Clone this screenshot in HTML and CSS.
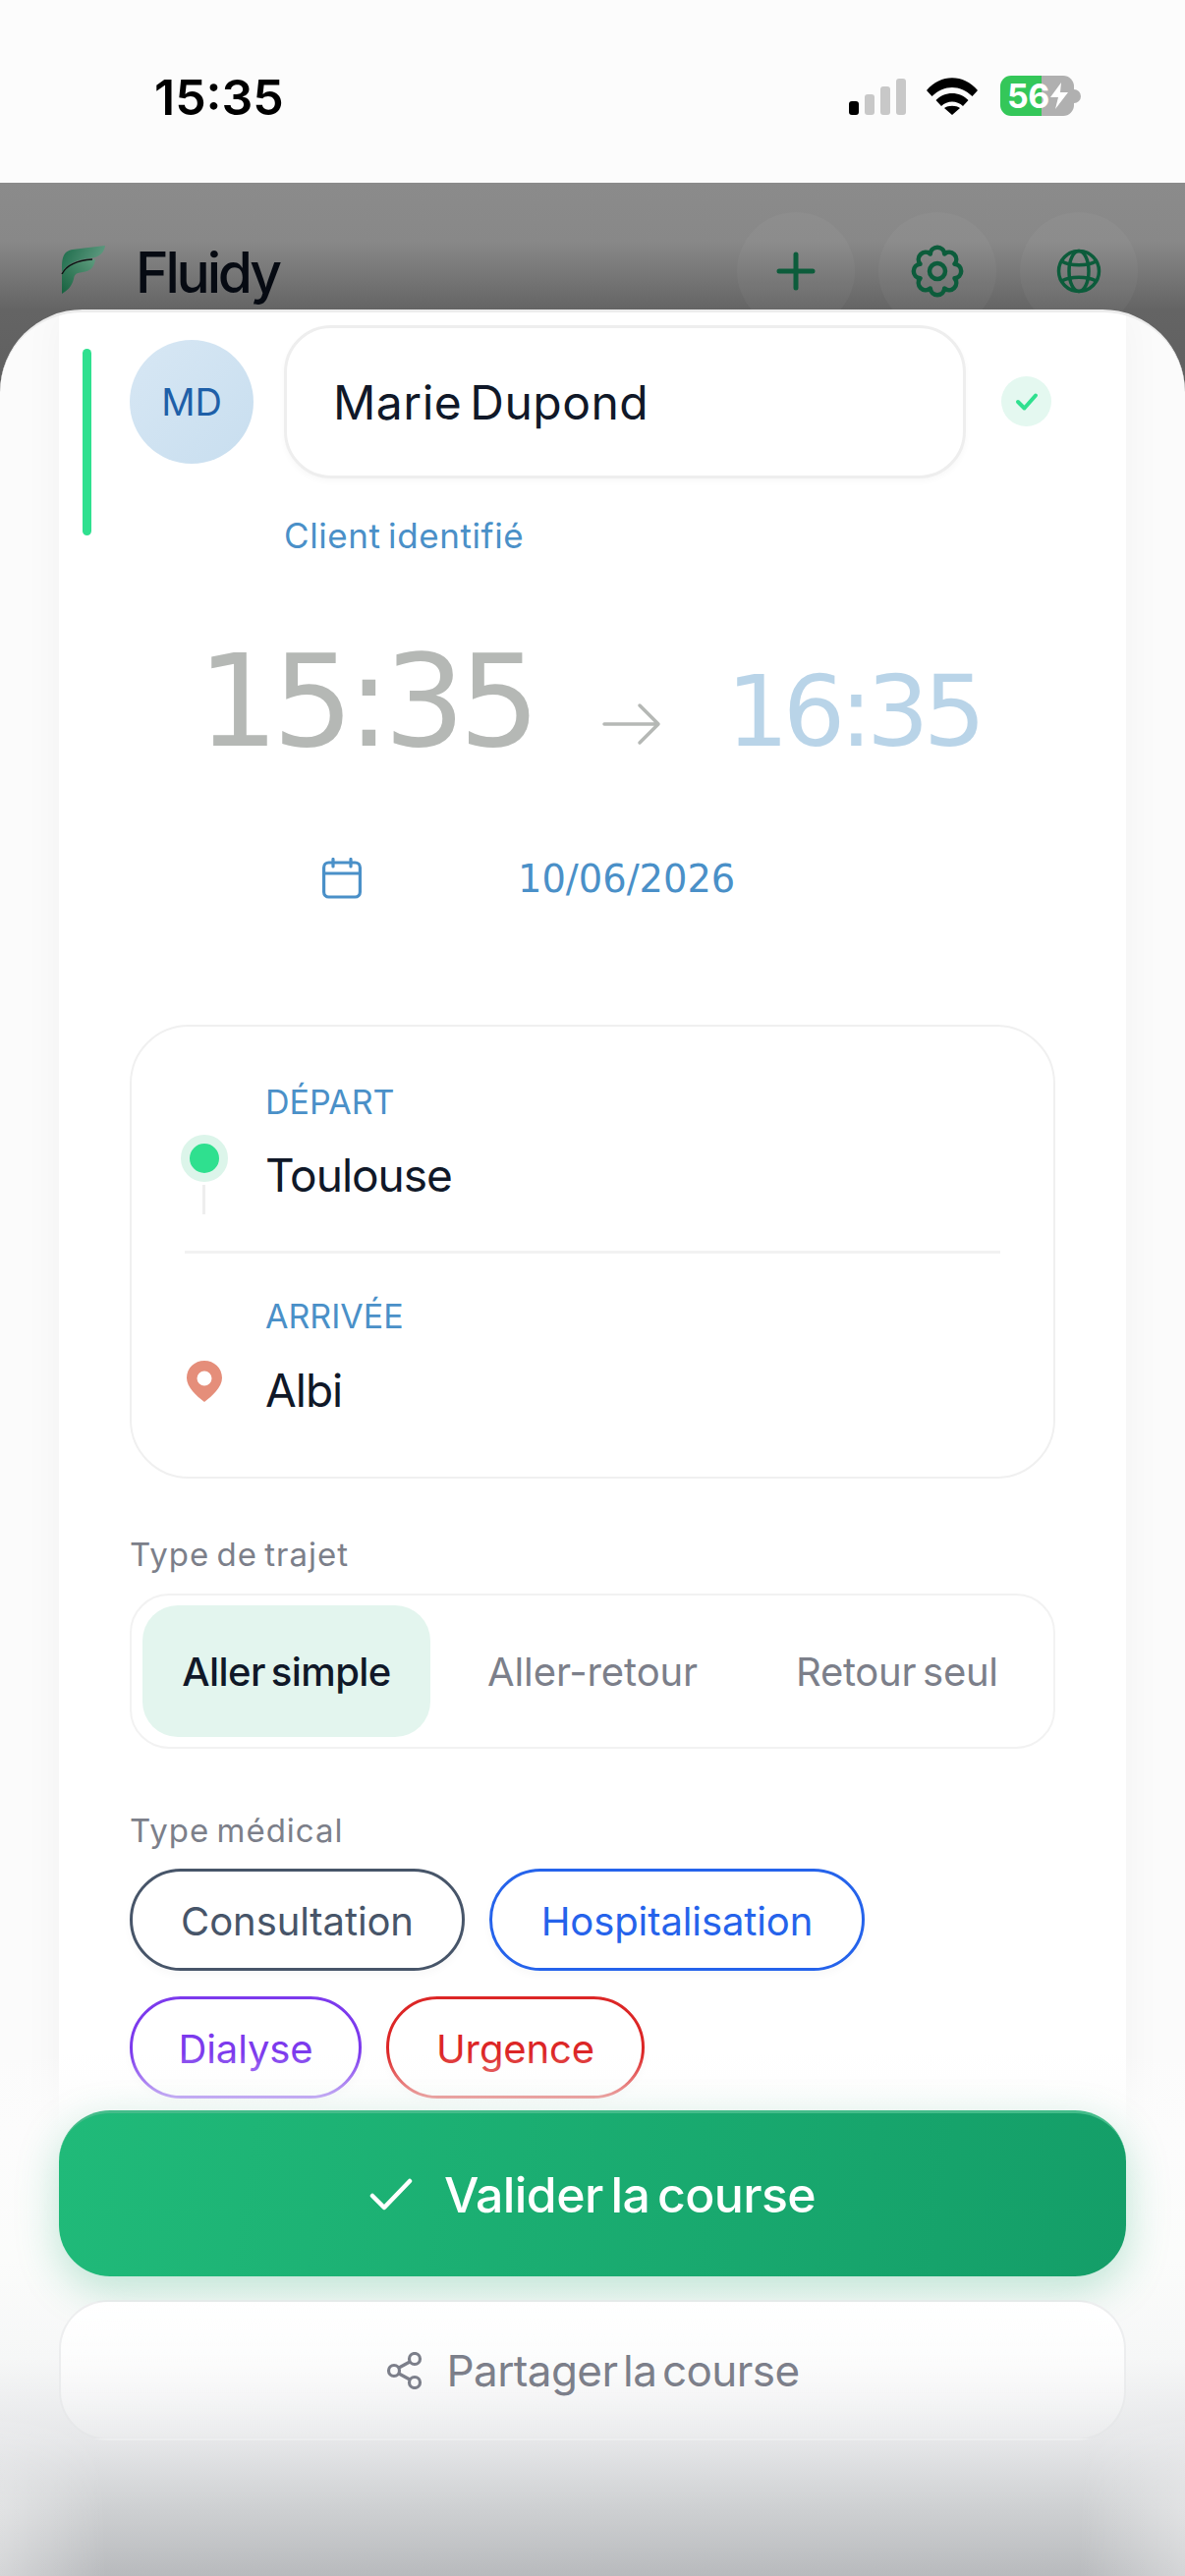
FILE: index.html
```html
<!DOCTYPE html>
<html lang="fr">
<head>
<meta charset="utf-8">
<title>Fluidy</title>
<link rel="stylesheet" href="styles.css">
</head>
<body>
<div class="phone">
  <div class="statusbar">
    <span class="clock">15:35</span>
    <div class="status-icons">
      <div class="signal"><i class="bar b1 on"></i><i class="bar b2"></i><i class="bar b3"></i><i class="bar b4"></i></div>
      <svg class="wifi" width="52" height="38" viewBox="0 0 52 38"><path d="M0 13 C14 -4 38 -4 52 13 L46.500 19 C34 7 18 7 5.500 19Z M9.500 23 C18 13.500 34 13.500 42.500 23 L37 29 C31 23 21 23 15 29Z M18 31 C22 28 30 28 34 31 L26 38Z" fill="#000"/></svg>
      <div class="battery"><div class="batt-body"><span class="batt-num">56</span><svg class="bolt" width="18" height="27" viewBox="0 0 18 27"><path d="M11 0 L0 15 H8 L5 27 L18 10 H10Z" fill="#fff"/></svg></div><i class="batt-cap"></i></div>
    </div>
  </div>
  <div class="backdrop">
    <header class="topbar">
      <div class="brand">
        <svg class="logo" width="46" height="50" viewBox="0 0 46 50">
          <defs>
            <linearGradient id="lg1" x1="0" y1="0" x2="1" y2="0.3"><stop offset="0" stop-color="#1c6b4a"/><stop offset="1" stop-color="#5f9a80"/></linearGradient>
            <linearGradient id="lg2" x1="0" y1="1" x2="1" y2="0"><stop offset="0" stop-color="#16613f"/><stop offset="1" stop-color="#5e9c7e"/></linearGradient>
          </defs>
          <path d="M1 27 C1 14 1 6 12 4 C22 3 34 1 45 0 C44 8 38 12 30 13 C18 14 8 17 1 27Z" fill="url(#lg1)"/>
          <path d="M1 49 L1 30 C6 20 16 16 35 14 C34 22 30 26 22 27 C14 28 14 30 13 34 C11 42 6 46 1 49Z" fill="url(#lg2)"/>
          <path d="M1 29 C6 19 16 15 32 14" fill="none" stroke="#0a1512" stroke-width="1.500"/>
        </svg>
        <span class="brand-name">Fluidy</span>
      </div>
      <div class="top-actions">
        <div class="round-btn"><svg width="44" height="44" viewBox="0 0 44 44"><path d="M22 5 V39 M5 22 H39" stroke="#0c5c3b" stroke-width="5" stroke-linecap="round" fill="none"/></svg></div>
        <div class="round-btn"><svg width="56" height="56" viewBox="-28 -28 56 56"><path d="M17.550 7.270 A7.300 7.300 0 0 1 7.270 17.550 A7.300 7.300 0 0 1 -7.270 17.550 A7.300 7.300 0 0 1 -17.550 7.270 A7.300 7.300 0 0 1 -17.550 -7.270 A7.300 7.300 0 0 1 -7.270 -17.550 A7.300 7.300 0 0 1 7.270 -17.550 A7.300 7.300 0 0 1 17.550 -7.270 A7.300 7.300 0 0 1 17.550 7.270Z" fill="none" stroke="#0c5c3b" stroke-width="4.500" stroke-linejoin="round"/><circle r="8" fill="none" stroke="#0c5c3b" stroke-width="4.500"/></svg></div>
        <div class="round-btn"><svg width="46" height="46" viewBox="0 0 46 46"><g fill="none" stroke="#0c5c3b" stroke-width="3.500"><circle cx="23" cy="23" r="20.500"/><ellipse cx="23" cy="23" rx="10" ry="20.500"/><path d="M5.500 13 C14 18 32 18 40.500 13 M5.500 33 C14 28 32 28 40.500 33"/></g></svg></div>
      </div>
    </header>
    <main class="sheet">
      <div class="card">
        <section class="client">
          <i class="accent"></i>
          <div class="avatar">MD</div>
          <div class="client-main">
            <div class="name-input">Marie Dupond</div>
            <div class="client-note">Client identifié</div>
          </div>
          <div class="ok-badge"><svg width="24" height="20" viewBox="0 0 24 20"><path d="M3 10 L9.500 16.500 L21 3.500" fill="none" stroke="#2fe08f" stroke-width="4" stroke-linecap="round" stroke-linejoin="round"/></svg></div>
        </section>
        <section class="times">
          <span class="time-start">15:35</span>
          <svg class="time-arrow" width="60" height="44" viewBox="0 0 60 44"><path d="M2 22 H56 M38 3 L57 22 L38 41" fill="none" stroke="#b5b8b5" stroke-width="3.500" stroke-linecap="round" stroke-linejoin="round"/></svg>
          <span class="time-end">16:35</span>
        </section>
        <section class="date-row">
          <svg width="40" height="42" viewBox="0 0 40 42"><g fill="none" stroke="#4a90c8" stroke-width="3.200" stroke-linecap="round"><rect x="1.600" y="5" width="36.800" height="35" rx="5"/><path d="M1.600 16 H38.400 M11 1.500 V9 M29 1.500 V9"/></g></svg>
          <span class="date-text">10/06/2026</span>
        </section>
        <section class="route">
          <div class="stop stop-from">
            <div class="marker">
              <span class="dot"></span>
              <i class="stem"></i>
            </div>
            <div class="stop-text">
              <div class="stop-label">DÉPART</div>
              <div class="stop-city">Toulouse</div>
            </div>
          </div>
          <hr class="route-sep">
          <div class="stop stop-to">
            <div class="marker">
              <svg width="36" height="42" viewBox="0 0 36 42"><path fill-rule="evenodd" d="M18 0 C8 0 0 7.500 0 17.500 C0 27 10 36 18 42 C26 36 36 27 36 17.500 C36 7.500 28 0 18 0Z M18 10.500 A7.500 7.500 0 1 1 18 25.500 A7.500 7.500 0 1 1 18 10.500Z" fill="#e58e7a"/></svg>
            </div>
            <div class="stop-text">
              <div class="stop-label">ARRIVÉE</div>
              <div class="stop-city">Albi</div>
            </div>
          </div>
        </section>
        <div class="field-label first">Type de trajet</div>
        <div class="segment">
          <span class="seg-item seg-active">Aller simple</span>
          <span class="seg-item seg-mid">Aller-retour</span>
          <span class="seg-item seg-last">Retour seul</span>
        </div>
        <div class="field-label second">Type médical</div>
        <div class="chips">
          <span class="chip chip-slate">Consultation</span>
          <span class="chip chip-blue">Hospitalisation</span>
          <span class="chip chip-violet">Dialyse</span>
          <span class="chip chip-red">Urgence</span>
        </div>
      </div>
    </main>
    <footer class="actions">
      <button class="btn-primary"><svg width="44" height="34" viewBox="0 0 44 34"><path d="M3 18 L15 30 L41 3" fill="none" stroke="#fff" stroke-width="4.500" stroke-linecap="round" stroke-linejoin="round"/></svg><span>Valider la course</span></button>
      <button class="btn-secondary"><svg width="38" height="38" viewBox="0 0 38 38"><g fill="none" stroke="#7c7f8a" stroke-width="3.200"><circle cx="29" cy="7" r="5.500"/><circle cx="8" cy="19" r="5.500"/><circle cx="29" cy="31" r="5.500"/><path d="M13 16 L24 10 M13 22 L24 28"/></g></svg><span>Partager la course</span></button>
    </footer>
    <div class="bottom-edges"></div>
  </div>
</div>
</body>
</html>
```
FILE: styles.css
```css
* { box-sizing: border-box; }
html, body { margin: 0; padding: 0; }
body { background: #fff; font-family: "Inter", "Liberation Sans", sans-serif; }
.phone { width: 1206px; height: 2622px; overflow: hidden; display: flex; flex-direction: column; background: #fff; }

.statusbar { height: 186px; flex: none; background: #fcfcfc; display: flex; align-items: flex-start; justify-content: space-between; padding: 66px 106px 0 157px; }
.clock { font-family: "Inter", sans-serif; font-weight: 600; font-size: 50px; line-height: 66px; letter-spacing: 0; color: #000; }
.status-icons { display: flex; align-items: flex-start; padding-top: 11px; }
.signal { display: flex; align-items: flex-end; gap: 6px; height: 38px; margin-right: 21px; margin-top: 2px; }
.bar { display: block; width: 10px; background: #c8c8c8; border-radius: 3px; }
.b1 { height: 14px; background: #000; }
.b2 { height: 21px; }
.b3 { height: 29px; }
.b4 { height: 37px; }
.wifi { margin-top: 2px; margin-right: 23px; }
.battery { display: flex; align-items: center; height: 41px; }
.batt-body { width: 75px; height: 41px; border-radius: 11px; background: linear-gradient(90deg, #34c759 0 42px, #b0b0b0 42px); display: flex; align-items: center; padding-left: 7px; }
.batt-num { font-family: "Inter", sans-serif; font-weight: 700; font-size: 34px; line-height: 41px; letter-spacing: -0.5px; color: #fff; }
.bolt { margin-left: 1px; }
.batt-cap { width: 7px; height: 14px; background: #b0b0b0; border-radius: 0 7px 7px 0; }

.backdrop { flex: 1; position: relative; display: flex; flex-direction: column; background: linear-gradient(180deg, #8b8b8b 0, #888 60px, #646464 130px, #5a5a5a 300px); }
.topbar { height: 129px; flex: none; display: flex; justify-content: space-between; padding: 30px 48px 0 62px; }
.brand { display: flex; align-items: flex-start; padding-top: 34px; }
.brand-name { font-family: "Inter", sans-serif; font-weight: 500; font-size: 57px; line-height: 60px; letter-spacing: -3.200px; color: #060a12; margin-left: 30px; margin-top: -2px; }
.top-actions { display: flex; gap: 24px; }
.round-btn { width: 120px; height: 120px; border-radius: 50%; background: rgba(255, 255, 255, 0.035); display: flex; align-items: center; justify-content: center; }

.sheet { flex: 1; position: relative; z-index: 1; overflow: hidden; background: #fbfbfb; border-radius: 84px 84px 0 0; border-top: 3px solid #ececec; padding: 0 60px; }
.card { height: 100%; background: #fff; box-shadow: 0 0 40px rgba(0, 0, 0, 0.04); padding: 0 72px; position: relative; }

.client { display: flex; align-items: flex-start; padding-top: 13px; height: 255px; }
.accent { position: absolute; left: 24px; top: 37px; width: 9px; height: 190px; border-radius: 5px; background: #2fe08f; }
.avatar { width: 126px; height: 126px; flex: none; margin-top: 15px; border-radius: 50%; background: linear-gradient(135deg, #d7e7f4, #c8deef); color: #1e5fa8; display: flex; align-items: center; justify-content: center; font-size: 38px; font-weight: 400; letter-spacing: 0; }
.client-main { margin-left: 31px; width: 694px; }
.name-input { height: 156px; border: 3px solid #eee; border-radius: 48px; background: #fff; box-shadow: 0 3px 6px rgba(0, 0, 0, 0.03); display: flex; align-items: center; padding-left: 47px; font-size: 48px; font-weight: 400; letter-spacing: 0.500px; word-spacing: -6px; color: #101828; }
.client-note { margin-top: 36px; font-size: 35px; line-height: 44px; letter-spacing: 0.600px; word-spacing: -3px; color: #4a90c8; }
.ok-badge { width: 51px; height: 51px; margin-left: 36px; margin-top: 52px; border-radius: 50%; background: #e4f8f0; display: flex; align-items: center; justify-content: center; flex: none; }

.times { display: flex; align-items: baseline; height: 190px; padding-left: 69px; padding-top: 76px; font-family: "DejaVu Sans", sans-serif; }
.time-start { font-size: 130px; line-height: 130px; letter-spacing: -6.500px; color: #b5b8b5; }
.time-arrow { align-self: flex-start; margin: 66px 0 0 70px; flex: none; }
.time-end { font-size: 100px; line-height: 130px; letter-spacing: -6px; color: #b9d4e8; margin-left: 66px; }

.date-row { display: flex; align-items: center; height: 70px; margin-top: 96px; padding-left: 196px; }
.date-text { font-family: "DejaVu Sans", sans-serif; font-size: 38.400px; margin-left: 159px; color: #4a90c8; }

.route { margin-top: 114px; height: 462px; border: 2px solid #f0f0f0; border-radius: 60px; padding: 0 54px; }
.stop { display: flex; align-items: flex-start; }
.stop-from { height: 231px; }
.stop-to { height: 226px; }
.marker { width: 82px; flex: none; display: flex; flex-direction: column; align-items: flex-start; position: relative; }
.dot { width: 48px; height: 48px; border-radius: 50%; background: #2fe08f; border: 9px solid #dcf5ea; margin-top: 110px; margin-left: -4px; }
.stem { width: 3px; height: 30px; margin-top: 3px; margin-left: 18px; background: #eee; display: block; }
.stop-to .marker svg { margin-top: 109px; margin-left: 2px; }
.stop-from .stop-text { padding-top: 52px; }
.stop-to .stop-text { padding-top: 39px; }
.stop-label { font-size: 34px; line-height: 50px; letter-spacing: 0; color: #4a90c8; font-weight: 400; }
.stop-city { font-size: 46px; line-height: 60px; letter-spacing: -1px; color: #101828; }
.stop-from .stop-city { margin-top: 19px; }
.stop-to .stop-city { margin-top: 20px; }
.route-sep { border: 0; height: 3px; margin: -3px 0 0; background: #f2f2f2; }

.field-label { font-size: 33px; line-height: 44px; letter-spacing: 1px; word-spacing: -3px; color: #7c7f8a; font-weight: 400; }
.field-label.first { margin-top: 55px; }
.field-label.second { margin-top: 61px; }
.segment { margin-top: 18px; height: 158px; border: 2px solid #f2f2f2; border-radius: 40px; padding: 10px 11px; display: flex; align-items: stretch; font-size: 40px; letter-spacing: -0.100px; word-spacing: -4px; color: #7c7f8a; }
.seg-item { display: flex; align-items: center; justify-content: center; }
.seg-active { width: 293px; border-radius: 36px; background: #e3f5ee; color: #101828; font-weight: 500; letter-spacing: -0.600px; }
.seg-mid { margin-left: 58px; }
.seg-last { margin-left: 100px; letter-spacing: -0.300px; }
.chips { margin-top: 17px; display: flex; flex-wrap: wrap; gap: 26px 25px; width: 800px; }
.chip { height: 104px; border: 3px solid; border-radius: 52px; background: #fff; display: flex; align-items: center; justify-content: center; padding-top: 2px; font-size: 40px; letter-spacing: -0.100px; font-weight: 400; box-shadow: 0 4px 8px rgba(0, 0, 0, 0.03); }
.chip-slate { width: 341px; color: #475569; border-color: #475569; }
.chip-blue { width: 382px; color: #2563eb; border-color: #2563eb; }
.chip-violet { width: 236px; color: #7c3aed; border-color: #7c3aed; }
.chip-red { width: 263px; color: #dc2626; border-color: #dc2626; }

.actions { position: absolute; left: 0; right: 0; bottom: 0; z-index: 2; height: 622px; padding: 148px 60px 0; display: flex; flex-direction: column; gap: 24px; background: linear-gradient(180deg, rgba(252, 252, 252, 0) 90px, rgba(252, 252, 252, 0.6) 136px, rgba(252, 252, 252, 0.97) 170px, #fbfcfb 300px, #f6f7f7 400px, #e6e7e9 484px, #cfd1d3 550px, #b8babd 622px); }
.bottom-edges { position: absolute; left: 0; right: 0; bottom: 0; z-index: 2; height: 170px; pointer-events: none; background: linear-gradient(90deg, rgba(255, 255, 255, 0.4), rgba(255, 255, 255, 0) 110px, rgba(255, 255, 255, 0) 1096px, rgba(255, 255, 255, 0.4)); -webkit-mask-image: linear-gradient(180deg, transparent, #000 100px); mask-image: linear-gradient(180deg, transparent, #000 100px); }
.btn-primary { height: 169px; flex: none; border: 0; border-top: 3px solid #44bc8a; border-radius: 52px; background: linear-gradient(100deg, #20ba79, #149e68); box-shadow: 0 14px 44px rgba(24, 170, 110, 0.28); color: #fff; display: flex; align-items: center; justify-content: center; gap: 32px; font-family: inherit; font-size: 50px; font-weight: 500; letter-spacing: -0.600px; word-spacing: -5px; }
.btn-secondary { height: 143px; flex: none; border: 2px solid rgba(225, 226, 228, 0.6); border-radius: 50px; background: linear-gradient(180deg, #fff, rgba(255, 255, 255, 0.15)); color: #7c7f8a; display: flex; align-items: center; justify-content: center; gap: 24px; font-family: inherit; font-size: 44px; font-weight: 400; letter-spacing: -0.600px; word-spacing: -6px; }
```
